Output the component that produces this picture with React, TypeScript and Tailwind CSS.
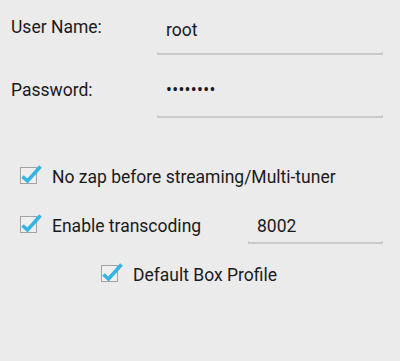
import React from 'react';

const Underline = () => (
  <div className="h-[3px] border-x-[1.5px] border-b-2 border-[#c9c9c9]" />
);

const Check = () => (
  <div className="relative w-[17px] h-[17px] shrink-0 border-[1.5px] border-[#a3a3a3] bg-[#efefef]">
    <svg className="absolute left-[-1.5px] top-[-5.5px]" width="24" height="22" viewBox="0 0 24 22">
      <path d="M2.5 13.5 L7.5 18 L20.5 3.5" fill="none" stroke="#33b5e5" strokeWidth="3.6" strokeLinecap="butt" strokeLinejoin="miter" />
    </svg>
  </div>
);

export default function App() {
  return (
    <div className="w-[400px] h-[361px] bg-[#ebebeb] text-[#1a1a1a] text-[17.5px] leading-[21px] font-['Roboto','Liberation_Sans',sans-serif] pt-[17px]">
      {/* User name */}
      <div className="flex pl-[11px]">
        <div className="w-[146px]">User Name:</div>
        <div className="w-[226px] pt-[3px]">
          <div className="pl-[9px]">root</div>
          <div className="mt-[11px]">
            <Underline />
          </div>
        </div>
      </div>

      {/* Password */}
      <div className="flex pl-[11px] mt-[25px]">
        <div className="w-[146px]">Password:</div>
        <div className="w-[226px]">
          <div className="pl-[9px] tracking-[0.3px]">••••••••</div>
          <div className="mt-[14px]">
            <Underline />
          </div>
        </div>
      </div>

      {/* Options */}
      <div className="mt-[49px]">
        <div className="flex items-start pl-[20px] h-[49px]">
          <Check />
          <div className="ml-[15px]">No zap before streaming/Multi-tuner</div>
        </div>

        <div className="flex items-start pl-[20px] h-[49px]">
          <div className="flex items-start w-[228px]">
            <Check />
            <div className="ml-[15px]">Enable transcoding</div>
          </div>
          <div className="w-[135px]">
            <div className="pl-[9px]">8002</div>
            <div className="mt-[4px]">
              <Underline />
            </div>
          </div>
        </div>

        <div className="flex items-start pl-[101px]">
          <Check />
          <div className="ml-[15px]">Default Box Profile</div>
        </div>
      </div>
    </div>
  );
}
